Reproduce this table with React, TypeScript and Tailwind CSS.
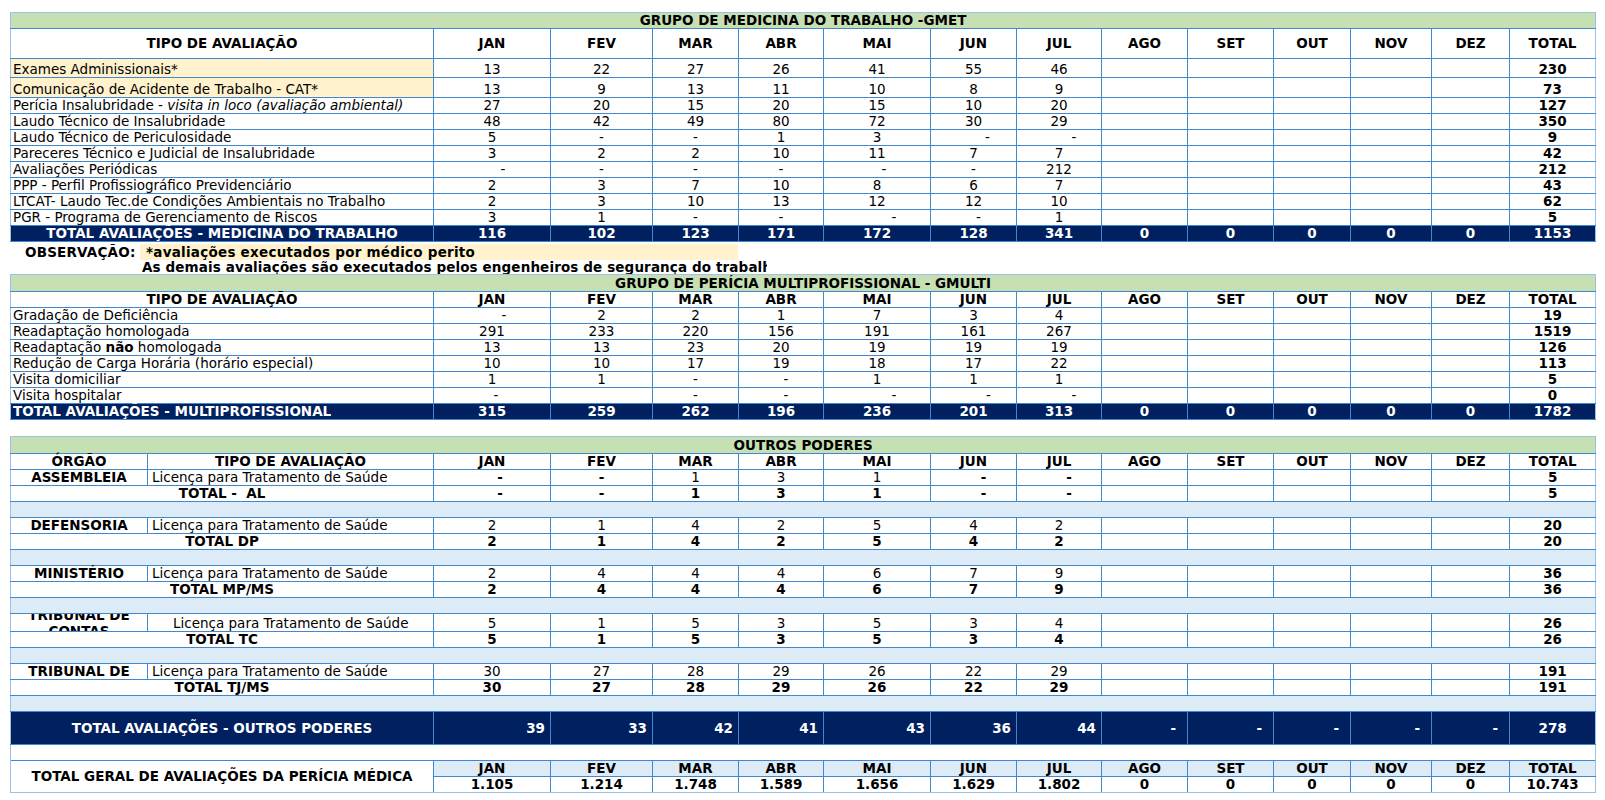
import React from 'react';

type V = string | [string, number];

const SHIFT: Record<number, string> = {
  4: 'pl-[8px]',
  5: 'pl-[10px]',
  7: 'pl-[14px]',
  8: 'pl-[16px]',
  10: 'pl-[20px]',
  11: 'pl-[22px]',
  12: 'pl-[24px]',
  14: 'pl-[28px]',
  15: 'pl-[30px]',
  17: 'pl-[34px]',
};

const MONTHS = ['JAN', 'FEV', 'MAR', 'ABR', 'MAI', 'JUN', 'JUL', 'AGO', 'SET', 'OUT', 'NOV', 'DEZ', 'TOTAL'];

const COLS_MONTH = [
  'w-[117px]',
  'w-[102px]',
  'w-[86px]',
  'w-[85px]',
  'w-[107px]',
  'w-[86px]',
  'w-[85px]',
  'w-[86px]',
  'w-[86px]',
  'w-[77px]',
  'w-[81px]',
  'w-[78px]',
  'w-[86px]',
];

const B = 'border border-[#4189cf]';
const CELL = 'p-0 whitespace-nowrap leading-[15px] align-bottom';

function valCls(v: V, extra = '') {
  const shift = Array.isArray(v) ? SHIFT[v[1]] : '';
  return `${CELL} ${B} text-center ${shift} ${extra}`;
}
function valTxt(v: V) {
  return Array.isArray(v) ? v[0] : v;
}

function MonthCells({ vals, total }: { vals: V[]; total: string }) {
  const cells: V[] = [...vals];
  while (cells.length < 12) cells.push('');
  return (
    <>
      {cells.map((v, i) => (
        <td key={i} className={valCls(v)}>
          {valTxt(v)}
        </td>
      ))}
      <td className={`${CELL} ${B} text-center font-bold border-r-[#9bc2e6]`}>{total}</td>
    </>
  );
}

function HeaderMonths({ middle }: { middle?: boolean }) {
  return (
    <>
      {MONTHS.map((m, i) => (
        <td
          key={m}
          className={`${CELL} ${B} text-center font-bold ${middle ? 'align-middle' : ''} ${i === 12 ? 'border-r-[#9bc2e6]' : ''}`}
        >
          {m}
        </td>
      ))}
    </>
  );
}

type Row1 = { label: React.ReactNode; yellow?: boolean; vals: V[]; total: string; h?: string };

const T1: Row1[] = [
  { label: 'Exames Adminissionais*', yellow: true, vals: ['13', '22', '27', '26', '41', '55', '46'], total: '230', h: 'h-[19px]' },
  { label: 'Comunicação de Acidente de Trabalho - CAT*', yellow: true, vals: ['13', '9', '13', '11', '10', '8', '9'], total: '73', h: 'h-[20px]' },
  {
    label: (
      <>
        Perícia Insalubridade - <i>visita in loco (avaliação ambiental)</i>
      </>
    ),
    vals: ['27', '20', '15', '20', '15', '10', '20'],
    total: '127',
  },
  { label: 'Laudo Técnico de Insalubridade', vals: ['48', '42', '49', '80', '72', '30', '29'], total: '350' },
  { label: 'Laudo Técnico de Periculosidade', vals: ['5', '-', '-', '1', '3', ['-', 14], ['-', 15]], total: '9' },
  { label: 'Pareceres Técnico e Judicial de Insalubridade', vals: ['3', '2', '2', '10', '11', '7', '7'], total: '42' },
  { label: 'Avaliações Periódicas', vals: [['-', 11], '-', '-', '-', ['-', 7], '-', '212'], total: '212' },
  { label: 'PPP - Perfil Profissiográfico Previdenciário', vals: ['2', '3', '7', '10', '8', '6', '7'], total: '43' },
  { label: 'LTCAT- Laudo Tec.de Condições Ambientais no Trabalho', vals: ['2', '3', '10', '13', '12', '12', '10'], total: '62' },
  { label: 'PGR - Programa de Gerenciamento de Riscos', vals: ['3', '1', '-', '-', ['-', 17], ['-', 5], '1'], total: '5' },
];

const T2: Row1[] = [
  { label: 'Gradação de Deficiência', vals: [['-', 12], '2', '2', '1', '7', '3', '4'], total: '19' },
  { label: 'Readaptação homologada', vals: ['291', '233', '220', '156', '191', '161', '267'], total: '1519' },
  {
    label: (
      <>
        Readaptação <b>não</b> homologada
      </>
    ),
    vals: ['13', '13', '23', '20', '19', '19', '19'],
    total: '126',
  },
  { label: 'Redução de Carga Horária (horário especial)', vals: ['10', '10', '17', '19', '18', '17', '22'], total: '113' },
  { label: 'Visita domiciliar', vals: ['1', '1', '-', ['-', 5], '1', '1', '1'], total: '5' },
  { label: 'Visita hospitalar', vals: [['-', 4], '', '-', ['-', 5], ['-', 17], ['-', 15], ['-', 15]], total: '0' },
];

const NAVY = 'bg-[#002060] text-white font-bold';

function TotalRow({ label, vals, total, left }: { label: string; vals: string[]; total: string; left?: boolean }) {
  return (
    <tr className="h-[16px]">
      <td className={`${CELL} ${B} ${NAVY} border-l-[#9bc2e6] ${left ? 'text-left pl-[2px]' : 'text-center'}`}>{label}</td>
      {vals.map((v, i) => (
        <td key={i} className={`${CELL} ${B} ${NAVY} text-center`}>
          {v}
        </td>
      ))}
      <td className={`${CELL} ${B} ${NAVY} text-center border-r-[#9bc2e6]`}>{total}</td>
    </tr>
  );
}

function Title({ text, span, h }: { text: string; span: number; h: string }) {
  return (
    <tr className={h}>
      <td
        colSpan={span}
        className={`${CELL} border border-[#4189cf] border-t-[#9bc2e6] border-l-[#9bc2e6] border-r-[#9bc2e6] bg-[#c6e0b4] text-center font-bold`}
      >
        {text}
      </td>
    </tr>
  );
}

function DataTable({ title, rows, header30, totalLabel, totalVals, totalSum, totalLeft, titleH }: {
  title: string;
  rows: Row1[];
  header30?: boolean;
  totalLabel: string;
  totalVals: string[];
  totalSum: string;
  totalLeft?: boolean;
  titleH: string;
}) {
  return (
    <table className="table-fixed border-collapse w-[1585px]">
      <colgroup>
        <col className="w-[423px]" />
        {COLS_MONTH.map((c, i) => (
          <col key={i} className={c} />
        ))}
      </colgroup>
      <tbody>
        <Title text={title} span={14} h={titleH} />
        <tr className={header30 ? 'h-[30px]' : 'h-[16px]'}>
          <td className={`${CELL} ${B} border-l-[#9bc2e6] text-center font-bold ${header30 ? 'align-middle' : ''}`}>TIPO DE AVALIAÇÃO</td>
          <HeaderMonths middle={header30} />
        </tr>
        {rows.map((r, i) => (
          <tr key={i} className={r.h ?? 'h-[16px]'}>
            <td className={`${CELL} ${B} border-l-[#9bc2e6] text-left pl-[2px] ${r.yellow ? 'bg-[#fff2cc]' : ''}`}>{r.label}</td>
            <MonthCells vals={r.vals} total={r.total} />
          </tr>
        ))}
        <TotalRow label={totalLabel} vals={totalVals} total={totalSum} left={totalLeft} />
      </tbody>
    </table>
  );
}

type Org = {
  name: React.ReactNode;
  wrapped?: boolean;
  indent?: boolean;
  vals: V[];
  totalVals: V[];
  total: string;
  totalLabel: React.ReactNode;
  rowH?: string;
};

const ORGS: Org[] = [
  {
    name: 'ASSEMBLEIA',
    vals: [['-', 8], '-', '1', '3', '1', ['-', 10], ['-', 10]],
    totalVals: [['-', 8], '-', '1', '3', '1', ['-', 10], ['-', 10]],
    total: '5',
    totalLabel: <>TOTAL -&nbsp; AL</>,
  },
  {
    name: 'DEFENSORIA',
    vals: ['2', '1', '4', '2', '5', '4', '2'],
    totalVals: ['2', '1', '4', '2', '5', '4', '2'],
    total: '20',
    totalLabel: 'TOTAL DP',
  },
  {
    name: 'MINISTÉRIO',
    vals: ['2', '4', '4', '4', '6', '7', '9'],
    totalVals: ['2', '4', '4', '4', '6', '7', '9'],
    total: '36',
    totalLabel: 'TOTAL MP/MS',
  },
  {
    name: (
      <>
        <span>TRIBUNAL DE</span>
        <span>CONTAS</span>
      </>
    ),
    wrapped: true,
    indent: true,
    vals: ['5', '1', '5', '3', '5', '3', '4'],
    totalVals: ['5', '1', '5', '3', '5', '3', '4'],
    total: '26',
    totalLabel: 'TOTAL TC',
    rowH: 'h-[18px]',
  },
  {
    name: 'TRIBUNAL DE',
    vals: ['30', '27', '28', '29', '26', '22', '29'],
    totalVals: ['30', '27', '28', '29', '26', '22', '29'],
    total: '191',
    totalLabel: 'TOTAL TJ/MS',
  },
];

function BlueRow() {
  return (
    <tr className="h-[16px]">
      <td colSpan={15} className={`${CELL} ${B} border-l-[#9bc2e6] border-r-[#9bc2e6] bg-[#ddebf7]`}></td>
    </tr>
  );
}

function OutrosTable() {
  const bigVals: [string, boolean][] = [
    ['39', false],
    ['33', false],
    ['42', false],
    ['41', false],
    ['43', false],
    ['36', false],
    ['44', false],
    ['-', true],
    ['-', true],
    ['-', true],
    ['-', true],
    ['-', true],
  ];
  const finals = ['1.105', '1.214', '1.748', '1.589', '1.656', '1.629', '1.802', '0', '0', '0', '0', '0', '10.743'];
  return (
    <table className="table-fixed border-collapse w-[1585px]">
      <colgroup>
        <col className="w-[137px]" />
        <col className="w-[286px]" />
        {COLS_MONTH.map((c, i) => (
          <col key={i} className={c} />
        ))}
      </colgroup>
      <tbody>
        <Title text="OUTROS PODERES" span={15} h="h-[17px]" />
        <tr className="h-[16px]">
          <td className={`${CELL} ${B} border-l-[#9bc2e6] text-center font-bold`}>ÓRGÃO</td>
          <td className={`${CELL} ${B} text-center font-bold`}>TIPO DE AVALIAÇÃO</td>
          <HeaderMonths />
        </tr>
        {ORGS.map((o, i) => (
          <React.Fragment key={i}>
            {i > 0 && <BlueRow />}
            <tr className={o.rowH ?? 'h-[16px]'}>
              <td className={`${CELL} ${B} border-l-[#9bc2e6] text-center font-bold`}>
                {o.wrapped ? (
                  <div className="h-[17px] overflow-hidden flex flex-col justify-center items-center leading-[16px]">{o.name}</div>
                ) : (
                  o.name
                )}
              </td>
              <td className={`${CELL} ${B} text-left ${o.indent ? 'pl-[25px]' : 'pl-[4px]'}`}>Licença para Tratamento de Saúde</td>
              {o.vals.map((v, j) => (
                <td key={j} className={valCls(v, valTxt(v) === '-' ? 'font-bold' : '')}>
                  {valTxt(v)}
                </td>
              ))}
              {[0, 1, 2, 3, 4].map((j) => (
                <td key={`e${j}`} className={`${CELL} ${B}`}></td>
              ))}
              <td className={`${CELL} ${B} text-center font-bold border-r-[#9bc2e6]`}>{o.total}</td>
            </tr>
            <tr className="h-[16px]">
              <td colSpan={2} className={`${CELL} ${B} border-l-[#9bc2e6] text-center font-bold`}>
                {o.totalLabel}
              </td>
              {o.totalVals.map((v, j) => (
                <td key={j} className={valCls(v, 'font-bold')}>
                  {valTxt(v)}
                </td>
              ))}
              {[0, 1, 2, 3, 4].map((j) => (
                <td key={`e${j}`} className={`${CELL} ${B}`}></td>
              ))}
              <td className={`${CELL} ${B} text-center font-bold border-r-[#9bc2e6]`}>{o.total}</td>
            </tr>
          </React.Fragment>
        ))}
        <BlueRow />
        <tr className="h-[33px]">
          <td colSpan={2} className={`${CELL} ${B} ${NAVY} border-l-[#9bc2e6] text-center align-middle`}>
            TOTAL AVALIAÇÕES - OUTROS PODERES
          </td>
          {bigVals.map(([v, dash], i) => (
            <td key={i} className={`${CELL} ${B} ${NAVY} text-right align-middle ${dash ? 'pr-[11px]' : 'pr-[5px]'}`}>
              {v}
            </td>
          ))}
          <td className={`${CELL} ${B} ${NAVY} text-center align-middle border-r-[#9bc2e6]`}>278</td>
        </tr>
        <tr className="h-[16px]">
          <td colSpan={15} className={`${CELL} border-l border-r border-l-[#9bc2e6] border-r-[#9bc2e6]`}></td>
        </tr>
        <tr className="h-[16px]">
          <td rowSpan={2} colSpan={2} className={`${CELL} ${B} border-l-[#9bc2e6] border-b-[#9bc2e6] text-center font-bold align-middle`}>
            TOTAL GERAL DE AVALIAÇÕES DA PERÍCIA MÉDICA
          </td>
          {MONTHS.map((m, i) => (
            <td key={m} className={`${CELL} ${B} bg-[#ddebf7] text-center font-bold ${i === 12 ? 'border-r-[#9bc2e6]' : ''}`}>
              {m}
            </td>
          ))}
        </tr>
        <tr className="h-[16px]">
          {finals.map((v, i) => (
            <td key={i} className={`${CELL} ${B} border-b-[#9bc2e6] text-center font-bold ${i === 12 ? 'border-r-[#9bc2e6]' : ''}`}>
              {v}
            </td>
          ))}
        </tr>
      </tbody>
    </table>
  );
}

export default function App() {
  return (
    <div className="w-[1605px] h-[800px] overflow-hidden bg-white text-black font-['DejaVu_Sans','Verdana',sans-serif] text-[13.5px] pl-[10px] pt-[12px]">
      <DataTable
        title="GRUPO DE MEDICINA DO TRABALHO -GMET"
        titleH="h-[16px]"
        rows={T1}
        header30
        totalLabel="TOTAL AVALIAÇÕES - MEDICINA DO TRABALHO"
        totalVals={['116', '102', '123', '171', '172', '128', '341', '0', '0', '0', '0', '0']}
        totalSum="1153"
      />
      <div className="flex h-[32px] pt-[2px] font-bold">
        <div className="w-[130px] pl-[15px] shrink-0 leading-[16px] tracking-[0.2px]">OBSERVAÇÃO:</div>
        <div className="flex flex-col">
          <div className="w-[598px] h-[16px] leading-[16px] bg-[#fff2cc] pl-[6px] whitespace-nowrap overflow-hidden tracking-[0.25px]">
            *avaliações executados por médico perito
          </div>
          <div className="w-[627px] h-[14px] leading-[14px] pl-[2px] whitespace-nowrap overflow-hidden tracking-[0.12px]">
            As demais avaliações são executados pelos engenheiros de segurança do trabalho
          </div>
        </div>
      </div>
      <DataTable
        title="GRUPO DE PERÍCIA MULTIPROFISSIONAL - GMULTI"
        titleH="h-[17px]"
        rows={T2}
        totalLabel="TOTAL AVALIAÇÕES - MULTIPROFISSIONAL"
        totalVals={['315', '259', '262', '196', '236', '201', '313', '0', '0', '0', '0', '0']}
        totalSum="1782"
        totalLeft
      />
      <div className="h-[16px]"></div>
      <OutrosTable />
    </div>
  );
}
